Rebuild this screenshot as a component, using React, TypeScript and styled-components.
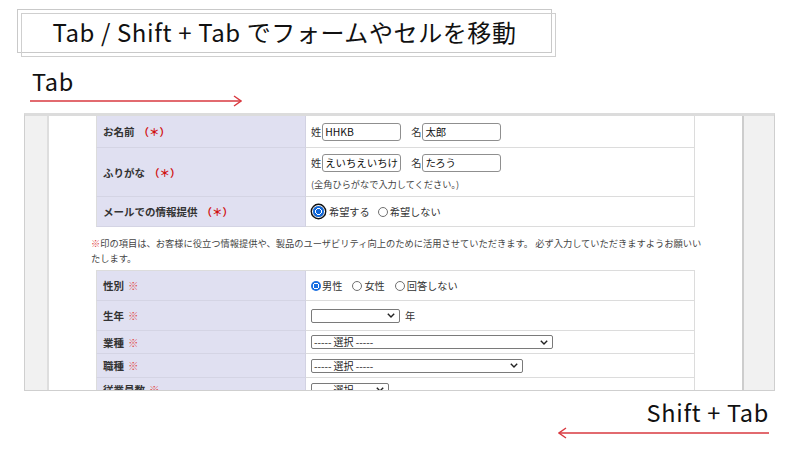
import React from 'react';
import styled, { createGlobalStyle } from 'styled-components';

const GlobalStyle = createGlobalStyle`
  html, body {
    margin: 0;
    padding: 0;
    background: #fff;
  }
`;

const Page = styled.div`
  width: 800px;
  height: 451px;
  overflow: hidden;
  background: #fff;
  padding-top: 9px;
  box-sizing: border-box;
  font-family: "Noto Sans CJK JP", "Noto Sans", sans-serif;
  color: #111;
`;

const TitleBox = styled.div`
  position: relative;
  margin-left: 17px;
  width: 535px;
  height: 44px;
  box-sizing: border-box;
  border: 1px solid #c9c9c9;
  display: flex;
  align-items: center;
  justify-content: center;
  padding-top: 2px;
  font-size: 24px;
  line-height: 1;
  letter-spacing: 0.6px;

  &::after {
    content: '';
    position: absolute;
    top: 3px;
    left: 3px;
    right: -5px;
    bottom: -5px;
    border: 1px solid #cfcfcf;
    pointer-events: none;
  }
`;

const KeyLabel = styled.div<{ $align: 'left' | 'right' }>`
  font-size: 23.5px;
  line-height: 26px;
  letter-spacing: 0.7px;
  ${({ $align }) =>
    $align === 'left'
      ? 'margin: 15px 0 0 32px;'
      : 'margin: 8px 31px 0 0; text-align: right;'}
`;

const ArrowWrap = styled.div<{ $left: number; $top: number }>`
  margin: ${({ $top }) => $top}px 0 0 ${({ $left }) => $left}px;
  height: 12px;
  display: flex;

  svg {
    display: block;
  }
`;

const Arrow: React.FC<{ width: number; dir: 'right' | 'left' }> = ({ width, dir }) => (
  <svg width={width} height={12} viewBox={`0 0 ${width} 12`}>
    {dir === 'right' ? (
      <g stroke="#d9383f" strokeWidth="1.4" fill="none">
        <line x1="0" y1="6" x2={width - 1} y2="6" />
        <polyline points={`${width - 8},1 ${width - 1},6 ${width - 8},11`} />
      </g>
    ) : (
      <g stroke="#d9383f" strokeWidth="1.4" fill="none">
        <line x1="1" y1="6" x2={width} y2="6" />
        <polyline points="8,1 1,6 8,11" />
      </g>
    )}
  </svg>
);

/* ---------- screenshot frame ---------- */

const Shot = styled.div`
  margin: 6px 0 0 24px;
  width: 751px;
  height: 278px;
  box-sizing: border-box;
  border: 1px solid #cfcfcf;
  border-top: 3px solid #dcdcdc;
  display: grid;
  grid-template-columns: 24px 693px 32px;
  overflow: hidden;
  font-family: "Noto Sans CJK JP", sans-serif;
  color: #333;
`;

const SideStrip = styled.div<{ $side: 'left' | 'right' }>`
  background: #f1f1f1;
  box-sizing: border-box;
  ${({ $side }) =>
    $side === 'left' ? 'border-right: 2px solid #dedede;' : 'border-left: 2px solid #cdcdcd;'}
`;

const Content = styled.div`
  background: #fff;
  padding-left: 42px;
  overflow: hidden;
`;

const FormTable = styled.div<{ $rows: string; $top?: boolean }>`
  margin-left: 5px;
  width: 599px;
  display: grid;
  grid-template-columns: 210px 389px;
  grid-template-rows: ${({ $rows }) => $rows};
  ${({ $top }) => ($top ? 'border-top: 1px solid #dcdcdc;' : '')}
`;

const LabelCell = styled.div`
  background: #e0e0f1;
  border-left: 1px solid #dcdcdc;
  border-bottom: 1px solid #d4d4e4;
  border-right: 1px solid #d2d2e2;
  box-sizing: border-box;
  padding-left: 6px;
  display: flex;
  align-items: center;
  font-size: 10.5px;
  font-weight: 700;
  color: #333;
`;

const Required = styled.span<{ $mark: 'paren' | 'kome' }>`
  color: ${({ $mark }) => ($mark === 'paren' ? '#d01010' : '#e04848')};
  margin-left: 4px;
  font-weight: ${({ $mark }) => ($mark === 'paren' ? 700 : 400)};
`;

const ValueCell = styled.div`
  border-right: 1px solid #dcdcdc;
  border-bottom: 1px solid #dcdcdc;
  box-sizing: border-box;
  padding: 0 5px;
  display: flex;
  flex-direction: column;
  justify-content: center;
  gap: 3px;
  font-size: 10.2px;
  color: #333;
`;

const Line = styled.div`
  display: flex;
  align-items: center;
`;

const Prefix = styled.span<{ $gap?: number }>`
  margin-left: ${({ $gap }) => $gap ?? 0}px;
  margin-right: 1px;
`;

const TextInput = styled.input`
  width: 79px;
  height: 18px;
  box-sizing: border-box;
  border: 1px solid #8f8f8f;
  border-radius: 3px;
  padding: 0 2px;
  font-family: "Noto Sans CJK JP", sans-serif;
  font-size: 10.4px;
  color: #111;
  background: #fff;
  outline: none;
`;

const Hint = styled.div`
  font-size: 9.2px;
  color: #444;
  margin-top: 2px;
`;

const Radio = styled.span<{ $state: 'off' | 'on' | 'focus' }>`
  display: inline-block;
  box-sizing: border-box;
  border-radius: 50%;
  flex-shrink: 0;
  ${({ $state }) => {
    switch ($state) {
      case 'focus':
        return `
          width: 11px; height: 11px;
          margin: 0 5px 0 2px;
          background: radial-gradient(circle, #1167d8 0 2.4px, #fff 2.6px 3.4px, #1167d8 3.6px);
          box-shadow: 0 0 0 1px #fff, 0 0 0 2.4px #101010;
        `;
      case 'on':
        return `
          width: 10px; height: 10px;
          margin-right: 1px;
          background: radial-gradient(circle, #1a6fe0 0 2.2px, #fff 2.4px 3.2px, #1a6fe0 3.4px);
        `;
      default:
        return `
          width: 10px; height: 10px;
          margin-right: 2px;
          border: 1px solid #707070;
          background: #fff;
        `;
    }
  }}
`;

const RadioText = styled.span<{ $gap: number }>`
  margin-right: ${({ $gap }) => $gap}px;
`;

const Note = styled.p`
  margin: 9px 0 4px 0;
  font-size: 9.25px;
  line-height: 15px;
  color: #444;
  white-space: nowrap;
`;

const Kome = styled.span`
  color: #e04848;
`;

const SelectBox = styled.div<{ $w: number }>`
  width: ${({ $w }) => $w}px;
  height: 14px;
  box-sizing: border-box;
  border: 1px solid #7a7a7a;
  border-radius: 2px;
  background: #fff;
  display: flex;
  align-items: center;
  justify-content: space-between;
  padding: 0 4px 0 2px;
  font-size: 10px;
  color: #222;
  line-height: 1;

  svg {
    display: block;
  }
`;

const Chevron = () => (
  <svg width="8" height="5" viewBox="0 0 8 5">
    <polyline points="0.8,0.8 4,4 7.2,0.8" fill="none" stroke="#222" strokeWidth="1.4" />
  </svg>
);

const Select: React.FC<{ width: number; text?: string }> = ({ width, text }) => (
  <SelectBox $w={width}>
    <span>{text}</span>
    <Chevron />
  </SelectBox>
);

const Unit = styled.span`
  margin-left: 5px;
`;

const choose = '----- 選択 -----';

export default function App() {
  return (
    <Page>
      <GlobalStyle />
      <TitleBox>Tab / Shift + Tab でフォームやセルを移動</TitleBox>

      <KeyLabel $align="left">Tab</KeyLabel>
      <ArrowWrap $left={30} $top={1}>
        <Arrow width={212} dir="right" />
      </ArrowWrap>

      <Shot>
        <SideStrip $side="left" />
        <Content>
          <FormTable $rows="32px 49px 30px">
            <LabelCell>
              お名前<Required $mark="paren">（＊）</Required>
            </LabelCell>
            <ValueCell>
              <Line>
                <Prefix>姓</Prefix>
                <TextInput readOnly value="HHKB" />
                <Prefix $gap={10}>名</Prefix>
                <TextInput readOnly value="太郎" />
              </Line>
            </ValueCell>

            <LabelCell>
              ふりがな<Required $mark="paren">（＊）</Required>
            </LabelCell>
            <ValueCell>
              <Line>
                <Prefix>姓</Prefix>
                <TextInput readOnly value="えいちえいちけー" />
                <Prefix $gap={10}>名</Prefix>
                <TextInput readOnly value="たろう" />
              </Line>
              <Hint>(全角ひらがなで入力してください。)</Hint>
            </ValueCell>

            <LabelCell>
              メールでの情報提供<Required $mark="paren">（＊）</Required>
            </LabelCell>
            <ValueCell>
              <Line>
                <Radio $state="focus" />
                <RadioText $gap={8}>希望する</RadioText>
                <Radio $state="off" />
                <RadioText $gap={0}>希望しない</RadioText>
              </Line>
            </ValueCell>
          </FormTable>

          <Note>
            <Kome>※</Kome>印の項目は、お客様に役立つ情報提供や、製品のユーザビリティ向上のために活用させていただきます。 必ず入力していただきますようお願いい
            <br />
            たします。
          </Note>

          <FormTable $rows="30px 30px 23px 24px 24px" $top>
            <LabelCell>
              性別<Required $mark="kome">※</Required>
            </LabelCell>
            <ValueCell>
              <Line>
                <Radio $state="on" />
                <RadioText $gap={10}>男性</RadioText>
                <Radio $state="off" />
                <RadioText $gap={10}>女性</RadioText>
                <Radio $state="off" />
                <RadioText $gap={0}>回答しない</RadioText>
              </Line>
            </ValueCell>

            <LabelCell>
              生年<Required $mark="kome">※</Required>
            </LabelCell>
            <ValueCell>
              <Line>
                <Select width={89} />
                <Unit>年</Unit>
              </Line>
            </ValueCell>

            <LabelCell>
              業種<Required $mark="kome">※</Required>
            </LabelCell>
            <ValueCell>
              <Select width={242} text={choose} />
            </ValueCell>

            <LabelCell>
              職種<Required $mark="kome">※</Required>
            </LabelCell>
            <ValueCell>
              <Select width={212} text={choose} />
            </ValueCell>

            <LabelCell>
              従業員数<Required $mark="kome">※</Required>
            </LabelCell>
            <ValueCell>
              <Select width={78} text={choose} />
            </ValueCell>
          </FormTable>
        </Content>
        <SideStrip $side="right" />
      </Shot>

      <KeyLabel $align="right">Shift + Tab</KeyLabel>
      <ArrowWrap $left={558} $top={2}>
        <Arrow width={211} dir="left" />
      </ArrowWrap>
    </Page>
  );
}
